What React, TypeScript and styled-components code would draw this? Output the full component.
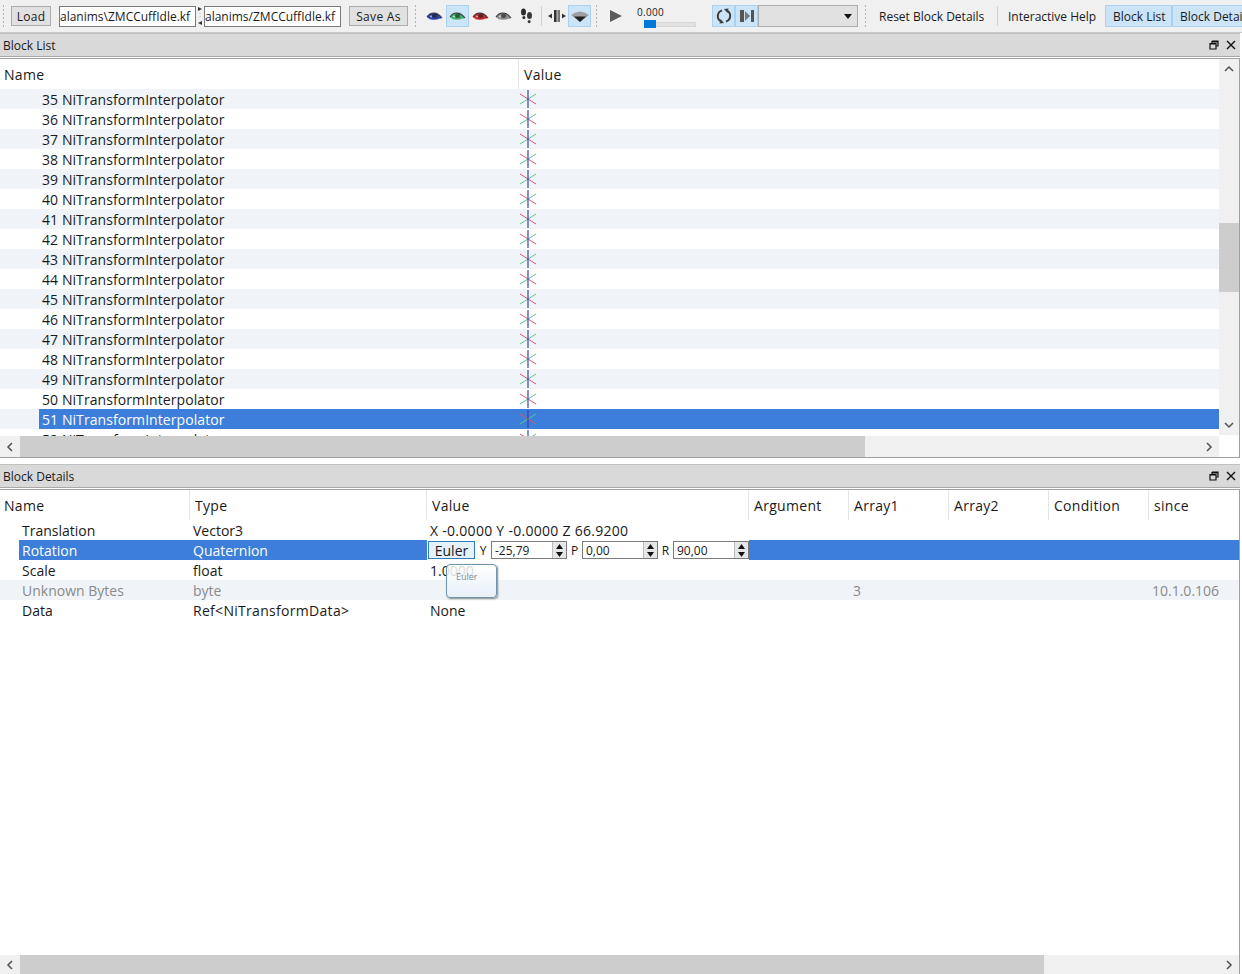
import styled, { createGlobalStyle } from 'styled-components';

const GlobalStyle = createGlobalStyle`
  html, body {
    margin: 0;
    padding: 0;
    background: #fff;
    overflow: hidden;
  }
  body {
    font-family: "Open Sans", "Noto Sans", sans-serif;
    color: #1a1a1a;
  }
`

const Window = styled.div`
  width: 1242px;
  height: 974px;
  display: flex;
  flex-direction: column;
  overflow: hidden;
`

const Toolbar = styled.div`
  height: 33px;
  box-sizing: border-box;
  flex: none;
  display: flex;
  align-items: center;
  background: #f0f0f0;
  border-bottom: 1px solid #c8c8c8;
  overflow: hidden;
  white-space: nowrap;
  font-size: 12px;
`

const Grip = styled.div<{ $ml: number; $mr: number }>`
  width: 3px;
  height: 24px;
  margin: 0 ${({ $mr }) => $mr}px 0 ${({ $ml }) => $ml}px;
  flex: none;
  background-image: radial-gradient(#b5b5b5 1px, transparent 1px);
  background-size: 3px 4px;
`

const ToolButton = styled.button<{ $w: number; $ml?: number }>`
  width: ${({ $w }) => $w}px;
  height: 20px;
  padding: 0;
  margin: 0 0 0 ${({ $ml }) => $ml ?? 0}px;
  flex: none;
  border: 1px solid #adadad;
  background: #e1e1e1;
  font: inherit;
  color: #1a1a1a;
  letter-spacing: 0.3px;
`

const PathInput = styled.div<{ $ml?: number }>`
  width: 137px;
  height: 21px;
  margin-left: ${({ $ml }) => $ml ?? 0}px;
  box-sizing: border-box;
  flex: none;
  display: flex;
  align-items: center;
  padding-left: 0;
  border: 1px solid #7a7a7a;
  background: #fff;
  overflow: hidden;
  font-size: 12px;
`

const SplitGap = styled.div`
  width: 8px;
  height: 20px;
  flex: none;
  display: flex;
  align-items: center;
  justify-content: center;
`

const Separator = styled.div<{ $ml?: number; $mr?: number }>`
  width: 1px;
  height: 20px;
  margin: 0 ${({ $mr }) => $mr ?? 0}px 0 ${({ $ml }) => $ml ?? 0}px;
  flex: none;
  background: #cfcfcf;
`

const IconSlot = styled.div<{ $on?: boolean; $ml?: number }>`
  width: 23px;
  height: 22px;
  margin-left: ${({ $ml }) => $ml ?? 0}px;
  box-sizing: border-box;
  flex: none;
  display: flex;
  align-items: center;
  justify-content: center;
  background: ${({ $on }) => ($on ? '#cce4f7' : 'transparent')};
  border: 1px solid ${({ $on }) => ($on ? '#a8d2f0' : 'transparent')};
`

const TimeBox = styled.div`
  width: 62px;
  margin-left: 10px;
  flex: none;
  display: flex;
  flex-direction: column;
  font-size: 10px;
  line-height: 12px;
`

const TimeLabel = styled.span`
  letter-spacing: 0.3px;
`

const TimeTrack = styled.div`
  height: 3px;
  margin: 4px 0 0 7px;
  width: 50px;
  background: #e3e3e3;
  border: 1px solid #d8d8d8;
  position: relative;
`

const TimeHandle = styled.div`
  position: absolute;
  left: -1px;
  top: -3px;
  width: 12px;
  height: 8px;
  background: #0078d7;
`

const Combo = styled.div`
  width: 100px;
  height: 22px;
  box-sizing: border-box;
  flex: none;
  display: flex;
  align-items: center;
  justify-content: flex-end;
  padding-right: 5px;
  background: #e1e1e1;
  border: 1px solid #adadad;
`

const TextAction = styled.div<{ $on?: boolean; $w: number; $ml?: number }>`
  width: ${({ $w }) => $w}px;
  height: 22px;
  margin-left: ${({ $ml }) => $ml ?? 0}px;
  box-sizing: border-box;
  flex: none;
  display: flex;
  align-items: center;
  padding-left: 7px;
  overflow: hidden;
  background: ${({ $on }) => ($on ? '#cce4f7' : 'transparent')};
  border: 1px solid ${({ $on }) => ($on ? '#a8d2f0' : 'transparent')};
`

const DockTitle = styled.div<{ $top: number }>`
  height: 24px;
  box-sizing: border-box;
  margin: ${({ $top }) => $top}px 2px 0 0;
  flex: none;
  display: flex;
  align-items: center;
  justify-content: space-between;
  padding: 0 4px 0 3px;
  background: #d9d9d9;
  border-top: 1px solid #c0c0c0;
  border-bottom: 1px solid #a8a8a8;
  font-size: 12px;
`

const DockIcons = styled.div`
  display: flex;
  align-items: center;
  gap: 7px;
`

const Panel = styled.div`
  flex: 1;
  min-height: 0;
  display: flex;
  flex-direction: column;
  margin: 1px 2px 0 0;
  border-top: 1px solid #a0a0a0;
  border-right: 1px solid #a0a0a0;
  position: relative;
`

const ListFrame = styled.div`
  height: 398px;
  flex: none;
  margin: 1px 2px 0 0;
  display: flex;
  border-top: 1px solid #a0a0a0;
  border-right: 1px solid #a0a0a0;
  border-bottom: 1px solid #a0a0a0;
`

const ListMain = styled.div`
  flex: 1;
  min-width: 0;
  display: flex;
  flex-direction: column;
`

const HeaderRow = styled.div`
  height: 30px;
  flex: none;
  display: flex;
  font-size: 14px;
  letter-spacing: 0.3px;
  background: #fff;
`

const HeaderCell = styled.div<{ $w?: number }>`
  width: ${({ $w }) => ($w ? `${$w}px` : 'auto')};
  flex: ${({ $w }) => ($w ? 'none' : 1)};
  box-sizing: border-box;
  display: flex;
  align-items: center;
  padding-left: 5px;
  border-right: 1px solid #e5e5e5;
  &:first-child {
    padding-left: 4px;
  }
  &:last-child {
    border-right: none;
  }
`

const ListRows = styled.div`
  height: 347px;
  flex: none;
  overflow: hidden;
  font-size: 14px;
  letter-spacing: 0.08px;
`

const ListRow = styled.div<{ $alt: boolean }>`
  height: 20px;
  display: flex;
  align-items: center;
  background: ${({ $alt }) => ($alt ? '#f0f4f8' : '#fff')};
`

const NameCell = styled.div<{ $sel?: boolean }>`
  width: 480px;
  height: 100%;
  margin-left: 39px;
  flex: none;
  display: flex;
  align-items: center;
  box-sizing: border-box;
  padding-left: 3px;
  background: ${({ $sel }) => ($sel ? '#3d7edb' : 'transparent')};
  color: ${({ $sel }) => ($sel ? '#fff' : '#1a1a1a')};
`

const ValueCell = styled.div<{ $sel?: boolean }>`
  flex: 1;
  height: 100%;
  display: flex;
  align-items: center;
  background: ${({ $sel }) => ($sel ? '#3d7edb' : 'transparent')};
`

const VScroll = styled.div`
  width: 20px;
  flex: none;
  display: flex;
  flex-direction: column;
  background: #f0f0f0;
`

const ArrowBox = styled.div`
  height: 20px;
  width: 100%;
  flex: none;
  display: flex;
  align-items: center;
  justify-content: center;
`

const VThumb = styled.div`
  width: 20px;
  height: 69px;
  margin-top: 144px;
  background: #cdcdcd;
`

const VFoot = styled.div`
  margin-top: auto;
  height: 42px;
  display: flex;
  flex-direction: column;
  align-items: center;
`

const Corner = styled.div`
  flex: 1;
  width: 100%;
  background: #fff;
`

const HScroll = styled.div<{ $h: number }>`
  height: ${({ $h }) => $h}px;
  flex: none;
  display: flex;
  align-items: center;
  background: #f0f0f0;
`

const HThumb = styled.div<{ $w: number }>`
  width: ${({ $w }) => $w}px;
  height: 100%;
  background: #cdcdcd;
  margin-right: auto;
`

const HEnd = styled.div`
  width: 20px;
  height: 100%;
  flex: none;
  display: flex;
  align-items: center;
  justify-content: center;
`

const DetailBody = styled.div`
  flex: 1;
  min-height: 0;
  font-size: 14px;
`

const DetailRow = styled.div<{ $alt?: boolean; $muted?: boolean }>`
  height: 20px;
  display: flex;
  align-items: center;
  background: ${({ $alt }) => ($alt ? '#f0f4f8' : '#fff')};
  color: ${({ $muted }) => ($muted ? '#8a8a8a' : '#1a1a1a')};
`

const SelectedName = styled.div`
  width: 169px;
  height: 100%;
  margin-left: 19px;
  flex: none;
  box-sizing: border-box;
  padding-left: 3px;
  display: flex;
  align-items: center;
  background: #3d7edb;
  color: #fff;
`

const DName = styled.div`
  width: 169px;
  margin-left: 19px;
  padding-left: 3px;
  box-sizing: border-box;
  flex: none;
`

const DType = styled.div<{ $sel?: boolean; $wide?: boolean }>`
  width: 238px;
  height: 100%;
  flex: none;
  box-sizing: border-box;
  padding-left: 5px;
  display: flex;
  align-items: center;
  letter-spacing: ${({ $wide }) => ($wide ? '0.3px' : 'normal')};
  background: ${({ $sel }) => ($sel ? '#3d7edb' : 'transparent')};
  color: ${({ $sel }) => ($sel ? '#fff' : 'inherit')};
`

const DValue = styled.div<{ $wide?: boolean }>`
  width: 427px;
  flex: none;
  padding-left: 4px;
  box-sizing: border-box;
  letter-spacing: ${({ $wide }) => ($wide ? '0.28px' : 'normal')};
`

const DArray = styled.div`
  width: 299px;
  flex: none;
`

const DSince = styled.div`
  flex: 1;
`

const EditorBar = styled.div`
  flex: 1;
  height: 100%;
  display: flex;
  align-items: center;
  background: #3d7edb;
`

const EditorFields = styled.div`
  width: 322px;
  height: 100%;
  margin-left: 1px;
  flex: none;
  display: flex;
  align-items: center;
  background: #fff;
`

const EulerButton = styled.div`
  width: 47px;
  height: 18px;
  margin-left: 1px;
  box-sizing: border-box;
  flex: none;
  display: flex;
  align-items: center;
  justify-content: center;
  border: 1px solid #2c7db8;
  background: #e5f1fb;
`

const AxisLabel = styled.span<{ $w: number }>`
  width: ${({ $w }) => $w}px;
  flex: none;
  text-align: center;
  font-size: 12px;
`

const SpinBox = styled.div`
  width: 76px;
  height: 18px;
  box-sizing: border-box;
  flex: none;
  display: flex;
  align-items: center;
  justify-content: space-between;
  padding-left: 3px;
  border: 1px solid #7a7a7a;
  background: #fff;
  font-size: 12px;
`

const SpinArrows = styled.div`
  width: 13px;
  height: 100%;
  flex: none;
  display: flex;
  flex-direction: column;
  justify-content: space-around;
  align-items: center;
  background: #e6e6e6;
  border-left: 1px solid #bdbdbd;
`

const Tooltip = styled.div`
  position: absolute;
  left: 446px;
  top: 74px;
  width: 51px;
  height: 34px;
  box-sizing: border-box;
  padding: 6px 0 0 9px;
  border: 1px solid #6d93ad;
  border-radius: 4px;
  background: linear-gradient(rgba(255, 255, 255, 0.82), rgba(232, 240, 248, 0.96));
  box-shadow: 1px 1px 2px #8a8a8a;
  color: #7d8a99;
  font-size: 9px;
  line-height: 12px;
`

const Chevron = ({ dir, size = 10 }: { dir: 'up' | 'down' | 'left' | 'right'; size?: number }) => {
  const points = {
    up: '1,7 5,3 9,7',
    down: '1,3 5,7 9,3',
    left: '7,1 3,5 7,9',
    right: '3,1 7,5 3,9',
  }[dir]
  return (
    <svg width={size} height={size} viewBox="0 0 10 10">
      <polyline points={points} fill="none" stroke="#505050" strokeWidth="1.5" />
    </svg>
  )
}

const Eye = ({ color }: { color: string }) => (
  <svg width="17" height="12" viewBox="0 0 17 12">
    <path d="M1 7 C4 2 11 1 16 8 C12 10 6 11 3 9 Z" fill={color} />
    <path d="M1 7 C4 2 11 1 16 8" fill="none" stroke="#3a3a3a" strokeWidth="1.1" />
    <path d="M2 8.5 C5 10.5 10 10.5 14 8.8" fill="none" stroke="#fff" strokeWidth="0.7" opacity="0.7" />
    <ellipse cx="8.6" cy="5.8" rx="2.6" ry="2.2" fill="#1f1f1f" opacity="0.6" />
    <ellipse cx="5" cy="6.5" rx="1.2" ry="1" fill="#fff" opacity="0.55" />
  </svg>
)

const Feet = () => (
  <svg width="13" height="17" viewBox="0 0 13 17">
    <ellipse cx="3.5" cy="4" rx="2.5" ry="3.6" fill="#2c2c2c" />
    <ellipse cx="3.9" cy="9.6" rx="1.5" ry="1.6" fill="#2c2c2c" />
    <ellipse cx="9.5" cy="7.5" rx="2.5" ry="3.6" fill="#3a3a3a" />
    <ellipse cx="9.1" cy="13.6" rx="1.5" ry="1.7" fill="#3a3a3a" />
  </svg>
)

const SpreadIcon = () => (
  <svg width="18" height="14" viewBox="0 0 18 14">
    <rect x="6" y="1" width="2.6" height="12" fill="#333" />
    <rect x="9.4" y="1" width="2.6" height="12" fill="#777" />
    <path d="M0 7 L4 4.5 V9.5 Z M18 7 L14 4.5 V9.5 Z" fill="#333" />
  </svg>
)

const ConeIcon = () => (
  <svg width="20" height="14" viewBox="0 0 20 14">
    <path d="M1 6 Q10 -1 19 6 L10 13 Z" fill="#a0a0a0" />
    <path d="M4 7.5 L16 7.5 L10 13 Z" fill="#222" />
  </svg>
)

const PlayIcon = () => (
  <svg width="14" height="14" viewBox="0 0 14 14">
    <path d="M1 1 L13 7 L1 13 Z" fill="#5a5a5a" />
  </svg>
)

const LoopIcon = () => (
  <svg width="16" height="16" viewBox="0 0 16 16">
    <path d="M6 2.4 A6 6 0 0 0 5 13.4" fill="none" stroke="#3e3e3e" strokeWidth="2" />
    <path d="M10 13.6 A6 6 0 0 0 11 2.6" fill="none" stroke="#3e3e3e" strokeWidth="2" />
    <path d="M8 1 L12.5 0.5 L11.5 5 Z M8 15 L3.5 15.5 L4.5 11 Z" fill="#3e3e3e" />
  </svg>
)

const SwitchIcon = () => (
  <svg width="16" height="14" viewBox="0 0 16 14">
    <rect x="1" y="1" width="4" height="12" fill="#555" />
    <path d="M6 2 L11 7 L6 12 Z" fill="#777" />
    <rect x="12" y="1" width="3" height="12" fill="#555" />
  </svg>
)

const Caret = () => (
  <svg width="8" height="5" viewBox="0 0 8 5">
    <path d="M0 0 H8 L4 5 Z" fill="#111" />
  </svg>
)

const SplitArrows = () => (
  <svg width="6" height="18" viewBox="0 0 6 18">
    <path d="M1 0 L5 2 L1 4 Z M5 14 L1 16 L5 18 Z" fill="#333" />
    <path d="M3 6 V12" stroke="#bbb" strokeDasharray="1 2" />
  </svg>
)

const AxisGizmo = () => (
  <svg width="18" height="20" viewBox="0 0 18 20">
    <line x1="1" y1="5" x2="17" y2="15" stroke="#d8586c" strokeWidth="1" />
    <line x1="1" y1="15" x2="17" y2="5" stroke="#52c98a" strokeWidth="1" />
    <line x1="9" y1="1" x2="9" y2="19" stroke="#3a42ae" strokeWidth="1.2" />
  </svg>
)

const FloatIcon = () => (
  <svg width="10" height="10" viewBox="0 0 10 10">
    <path d="M3 1 H9 V6 H7 M1 3.5 H7 V9 H1 Z M3 1 V3" fill="none" stroke="#111" strokeWidth="1.2" />
    <path d="M3 1 H9 V2.4 H3 Z M1 3 H7 V4.6 H1 Z" fill="#111" />
  </svg>
)

const CloseIcon = () => (
  <svg width="10" height="10" viewBox="0 0 10 10">
    <path d="M1 1 L9 9 M9 1 L1 9" stroke="#111" strokeWidth="1.4" />
  </svg>
)

const SpinTiny = ({ up }: { up: boolean }) => (
  <svg width="7" height="5" viewBox="0 0 7 5">
    <path d={up ? 'M0 5 L3.5 0 L7 5 Z' : 'M0 0 L7 0 L3.5 5 Z'} fill="#111" />
  </svg>
)

const DockButtons = () => (
  <DockIcons>
    <FloatIcon />
    <CloseIcon />
  </DockIcons>
)

const Spin = ({ value }: { value: string }) => (
  <SpinBox>
    {value}
    <SpinArrows>
      <SpinTiny up />
      <SpinTiny up={false} />
    </SpinArrows>
  </SpinBox>
)

const blockIds = Array.from({ length: 18 }, (_, i) => i + 35)

const detailColumns = [
  { label: 'Name', w: 190 },
  { label: 'Type', w: 237 },
  { label: 'Value', w: 322 },
  { label: 'Argument', w: 100 },
  { label: 'Array1', w: 100 },
  { label: 'Array2', w: 100 },
  { label: 'Condition', w: 100 },
  { label: 'since' },
]

const App = () => {
  return (
    <>
      <GlobalStyle />
      <Window>
        <Toolbar>
          <Grip $ml={2} $mr={6} />
          <ToolButton $w={40}>Load</ToolButton>
          <PathInput $ml={8}>alanims\ZMCCuffIdle.kf</PathInput>
          <SplitGap><SplitArrows /></SplitGap>
          <PathInput>alanims/ZMCCuffIdle.kf</PathInput>
          <ToolButton $w={59} $ml={8}>Save As</ToolButton>
          <Grip $ml={6} $mr={6} />
          <IconSlot><Eye color="#2a3fa8" /></IconSlot>
          <IconSlot $on><Eye color="#3fae6a" /></IconSlot>
          <IconSlot><Eye color="#c0282d" /></IconSlot>
          <IconSlot><Eye color="#8c8c8c" /></IconSlot>
          <IconSlot><Feet /></IconSlot>
          <Separator $ml={3} $mr={3} />
          <IconSlot><SpreadIcon /></IconSlot>
          <IconSlot $on><ConeIcon /></IconSlot>
          <Grip $ml={4} $mr={6} />
          <IconSlot><PlayIcon /></IconSlot>
          <TimeBox>
            <TimeLabel>0.000</TimeLabel>
            <TimeTrack><TimeHandle /></TimeTrack>
          </TimeBox>
          <IconSlot $on $ml={13}><LoopIcon /></IconSlot>
          <IconSlot $on><SwitchIcon /></IconSlot>
          <Combo><Caret /></Combo>
          <Grip $ml={6} $mr={4} />
          <TextAction $w={126}>Reset Block Details</TextAction>
          <Separator />
          <TextAction $w={105} $ml={2}>Interactive Help</TextAction>
          <TextAction $w={67} $on>Block List</TextAction>
          <TextAction $w={90} $on>Block Details</TextAction>
        </Toolbar>

        <DockTitle $top={0}>
          Block List
          <DockButtons />
        </DockTitle>
        <ListFrame>
          <ListMain>
            <HeaderRow>
              <HeaderCell $w={519}>Name</HeaderCell>
              <HeaderCell>Value</HeaderCell>
            </HeaderRow>
            <ListRows>
              {blockIds.map((id, i) => {
                const sel = id === 51
                return (
                  <ListRow key={id} $alt={i % 2 === 0}>
                    <NameCell $sel={sel}>{id} NiTransformInterpolator</NameCell>
                    <ValueCell $sel={sel}><AxisGizmo /></ValueCell>
                  </ListRow>
                )
              })}
            </ListRows>
            <HScroll $h={21}>
              <HEnd><Chevron dir="left" /></HEnd>
              <HThumb $w={845} />
              <HEnd><Chevron dir="right" /></HEnd>
            </HScroll>
          </ListMain>
          <VScroll>
            <ArrowBox><Chevron dir="up" /></ArrowBox>
            <VThumb />
            <VFoot>
              <ArrowBox><Chevron dir="down" /></ArrowBox>
              <Corner />
            </VFoot>
          </VScroll>
        </ListFrame>

        <DockTitle $top={6}>
          Block Details
          <DockButtons />
        </DockTitle>
        <Panel>
          <HeaderRow>
            {detailColumns.map((col) => (
              <HeaderCell key={col.label} $w={col.w}>{col.label}</HeaderCell>
            ))}
          </HeaderRow>
          <DetailBody>
            <DetailRow>
              <DName>Translation</DName>
              <DType>Vector3</DType>
              <DValue $wide>X -0.0000 Y -0.0000 Z 66.9200</DValue>
            </DetailRow>
            <DetailRow>
              <SelectedName>Rotation</SelectedName>
              <DType $sel>Quaternion</DType>
              <EditorBar>
                <EditorFields>
                  <EulerButton>Euler</EulerButton>
                  <AxisLabel $w={16}>Y</AxisLabel>
                  <Spin value="-25,79" />
                  <AxisLabel $w={15}>P</AxisLabel>
                  <Spin value="0,00" />
                  <AxisLabel $w={15}>R</AxisLabel>
                  <Spin value="90,00" />
                </EditorFields>
              </EditorBar>
            </DetailRow>
            <DetailRow>
              <DName>Scale</DName>
              <DType>float</DType>
              <DValue>1.0000</DValue>
            </DetailRow>
            <DetailRow $alt $muted>
              <DName>Unknown Bytes</DName>
              <DType>byte</DType>
              <DValue />
              <DArray>3</DArray>
              <DSince>10.1.0.106</DSince>
            </DetailRow>
            <DetailRow>
              <DName>Data</DName>
              <DType $wide>{'Ref<NiTransformData>'}</DType>
              <DValue>None</DValue>
            </DetailRow>
          </DetailBody>
          <Tooltip>Euler</Tooltip>
          <HScroll $h={19}>
            <HEnd><Chevron dir="left" /></HEnd>
            <HThumb $w={1024} />
            <HEnd><Chevron dir="right" /></HEnd>
          </HScroll>
        </Panel>
      </Window>
    </>
  )
}

export default App;
